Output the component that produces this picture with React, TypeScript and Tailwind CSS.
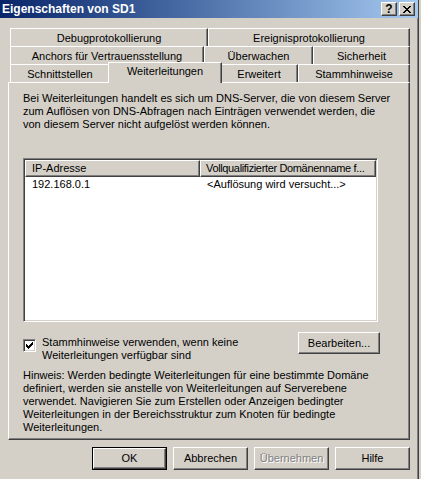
import * as React from 'react'

const raised = 'border-t border-l border-white border-r border-b border-r-[#404040] border-b-[#404040] shadow-[inset_-1px_-1px_0_#808080]'

function Tab({ label, w, selected }: { label: string; w: number; selected?: boolean }) {
  if (selected) {
    return (
      <div
        className="relative z-10 -mx-[2px] -mt-[2px] -mb-[1px] flex h-[21px] shrink-0 items-start justify-center border-t border-l border-white border-r border-r-[#404040] bg-[#d4d0c8] pt-[2px] shadow-[inset_-1px_0_0_#808080]"
        style={{ width: w + 4 }}
      >
        {label}
      </div>
    )
  }
  return (
    <div
      className="flex h-[18px] shrink-0 items-center justify-center border-t border-l border-white border-r border-r-[#404040] pt-[1px] shadow-[inset_-1px_0_0_#808080]"
      style={{ width: w }}
    >
      {label}
    </div>
  )
}

function Btn({ label, w = 75, isDefault, disabled }: { label: string; w?: number; isDefault?: boolean; disabled?: boolean }) {
  return (
    <div
      className={`h-[23px] shrink-0 ${isDefault ? 'border border-black' : ''}`}
      style={{ width: w }}
    >
      <div
        className={`flex h-full w-full items-center justify-center ${raised} ${
          disabled ? 'text-[#808080] [text-shadow:1px_1px_0_#ffffff]' : ''
        }`}
      >
        {label}
      </div>
    </div>
  )
}

function Check() {
  // classic 7x7 check mark, one rect per pixel run
  const rows: [number, number, number][] = [
    [0, 6, 1],
    [1, 5, 2],
    [2, 0, 1],
    [2, 4, 3],
    [3, 0, 2],
    [3, 3, 3],
    [4, 0, 5],
    [5, 1, 3],
    [6, 2, 1],
  ]
  return (
    <div className="mt-[3px] flex h-[13px] w-[13px] shrink-0 items-center justify-center border border-[#808080] border-r-white border-b-white bg-white shadow-[inset_1px_1px_0_#404040,inset_-1px_-1px_0_#d4d0c8]">
      <svg width="7" height="7" viewBox="0 0 7 7" shapeRendering="crispEdges">
        {rows.map(([y, x, w], i) => (
          <rect key={i} x={x} y={y} width={w} height={1} fill="#000" />
        ))}
      </svg>
    </div>
  )
}

export default function App() {
  return (
    <div className="relative h-[479px] w-[421px] overflow-hidden bg-[#d4d0c8] font-['Tahoma','Liberation_Sans',Arial,sans-serif] text-[11px] leading-[13px] text-black">
      <div className="flex h-full w-[419px] flex-col border-r border-r-[#404040] shadow-[inset_-1px_0_0_#808080]">
        {/* Title bar */}
        <div className="flex h-[18px] shrink-0 items-center justify-between bg-linear-to-r from-[#0a246a] to-[#a6caf0] pr-[3px] pl-[2px]">
          <span className="text-[12px] font-bold text-white">Eigenschaften von SD1</span>
          <div className="flex gap-[2px]">
            <div className={`flex h-[14px] w-[16px] items-center justify-center bg-[#d4d0c8] text-[12px] leading-none font-bold ${raised}`}>
              ?
            </div>
            <div className={`flex h-[14px] w-[16px] items-center justify-center bg-[#d4d0c8] ${raised}`}>
              <svg width="8" height="7" viewBox="0 0 8 7" shapeRendering="crispEdges">
                <path d="M0 0h2v1h-2zM6 0h2v1h-2zM1 1h2v1h-2zM5 1h2v1h-2zM2 2h4v1h-4zM3 3h2v1h-2zM2 4h4v1h-4zM1 5h2v1h-2zM5 5h2v1h-2zM0 6h2v1h-2zM6 6h2v1h-2z" fill="#000" />
              </svg>
            </div>
          </div>
        </div>

        {/* Tabs */}
        <div className="mt-[10px] ml-[10px] flex flex-col">
          <div className="flex">
            <Tab label="Debugprotokollierung" w={198} />
            <Tab label="Ereignisprotokollierung" w={202} />
          </div>
          <div className="flex">
            <Tab label="Anchors für Vertrauensstellung" w={194} />
            <Tab label="Überwachen" w={109} />
            <Tab label="Sicherheit" w={97} />
          </div>
          <div className="flex h-[18px]">
            <Tab label="Schnittstellen" w={100} />
            <Tab label="Weiterleitungen" w={110} selected />
            <Tab label="Erweitert" w={78} />
            <Tab label="Stammhinweise" w={112} />
          </div>
        </div>

        {/* Panel */}
        <div className="ml-[8px] flex h-[358px] w-[402px] flex-col border-t border-l border-white border-r border-b border-r-[#404040] border-b-[#404040] pl-[14px] shadow-[inset_-1px_-1px_0_#808080]">
          <p className="mt-[9px] whitespace-nowrap">
            Bei Weiterleitungen handelt es sich um DNS-Server, die von diesem Server
            <br />
            zum Auflösen von DNS-Abfragen nach Einträgen verwendet werden, die
            <br />
            von diesem Server nicht aufgelöst werden können.
          </p>

          <div className="mt-[27px] h-[164px] w-[355px] border border-[#808080] border-r-white border-b-white bg-white p-[1px] shadow-[inset_1px_1px_0_#404040,inset_-1px_-1px_0_#d4d0c8]">
            <div className="flex h-[17px] bg-[#d4d0c8]">
              <div className={`flex w-[175px] items-center overflow-hidden pl-[6px] whitespace-nowrap ${raised}`}>IP-Adresse</div>
              <div className={`flex w-[176px] items-center overflow-hidden pl-[5px] tracking-[-0.35px] whitespace-nowrap ${raised}`}>
                Vollqualifizierter Domänenname f...
              </div>
            </div>
            <div className="flex h-[15px] items-center whitespace-nowrap">
              <div className="w-[175px] pl-[7px]">192.168.0.1</div>
              <div className="pl-[7px]">&lt;Auflösung wird versucht...&gt;</div>
            </div>
          </div>

          <div className="mt-[10px] flex w-[357px] items-start justify-between">
            <div className="flex gap-[6px] pt-[4px]">
              <Check />
              <span>
                Stammhinweise verwenden, wenn keine
                <br />
                Weiterleitungen verfügbar sind
              </span>
            </div>
            <div className="h-[22px] w-[82px]">
              <div className={`flex h-full w-full items-center justify-center ${raised}`}>Bearbeiten...</div>
            </div>
          </div>

          <p className="mt-[7px] whitespace-nowrap">
            Hinweis: Werden bedingte Weiterleitungen für eine bestimmte Domäne
            <br />
            definiert, werden sie anstelle von Weiterleitungen auf Serverebene
            <br />
            verwendet. Navigieren Sie zum Erstellen oder Anzeigen bedingter
            <br />
            Weiterleitungen in der Bereichsstruktur zum Knoten für bedingte
            <br />
            Weiterleitungen.
          </p>
        </div>

        {/* Dialog buttons */}
        <div className="mt-[7px] ml-[8px] flex w-[402px] justify-end gap-[6px]">
          <Btn label="OK" isDefault />
          <Btn label="Abbrechen" />
          <Btn label="Übernehmen" disabled />
          <Btn label="Hilfe" />
        </div>
      </div>
    </div>
  )
}
